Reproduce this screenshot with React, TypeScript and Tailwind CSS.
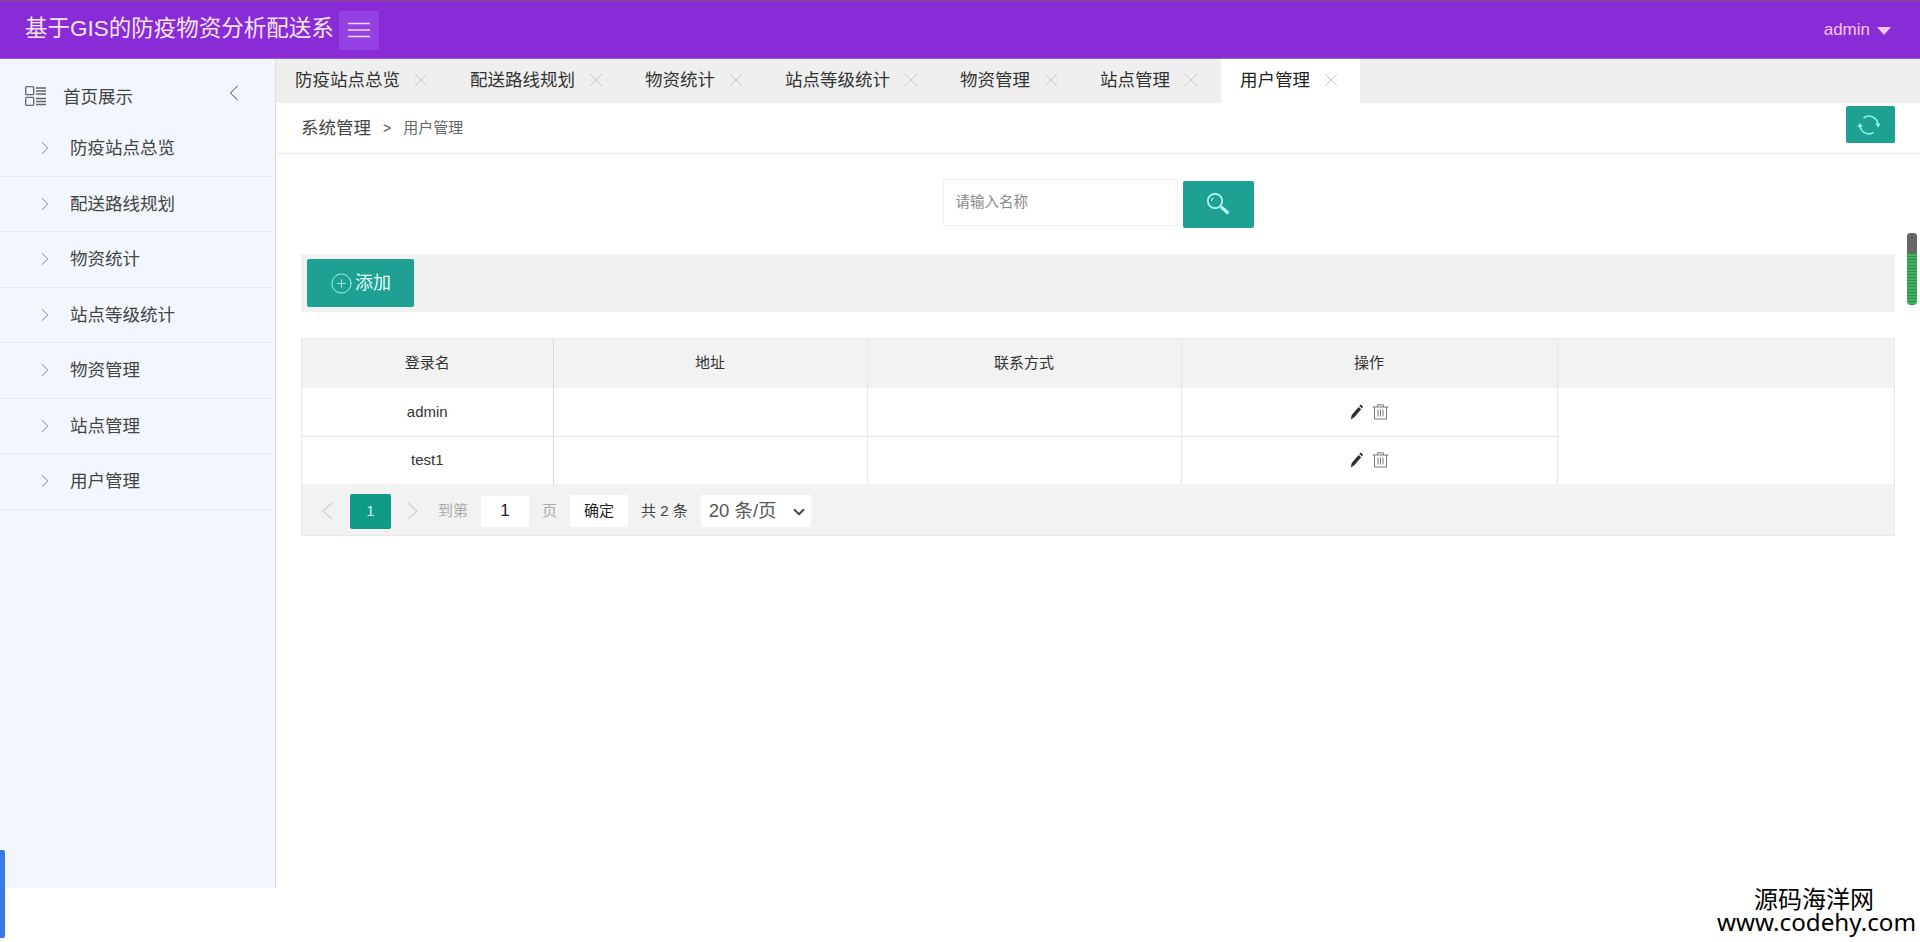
import { ChevronDown, ChevronLeft, ChevronRight, CirclePlus, X } from "lucide-react";

const menuItems = ["防疫站点总览", "配送路线规划", "物资统计", "站点等级统计", "物资管理", "站点管理", "用户管理"];
const tabs = ["防疫站点总览", "配送路线规划", "物资统计", "站点等级统计", "物资管理", "站点管理", "用户管理"];
const users = ["admin", "test1"];

function DashIcon() {
  return (
    <svg width="21" height="20" viewBox="0 0 21 20" fill="none" stroke="#666" strokeWidth="1.3">
      <rect x="0.7" y="0.7" width="8" height="8" rx="1" />
      <rect x="0.7" y="11.3" width="8" height="8" rx="1" />
      <path d="M11 2h10M11 5h10M11 8h10M11 12.5h10M11 15.5h10M11 18.5h10" />
    </svg>
  );
}

function RefreshIcon() {
  return (
    <svg width="24" height="24" viewBox="0 0 24 24" fill="none" stroke="#8ff5e8" strokeWidth="1.6">
      <path d="M6.5 5A9 9 0 0 1 21 11.5" />
      <path d="M16.5 19.5A9 9 0 0 1 3 13" />
      <path d="M18.2 10.5l2.9 4 2.6-4z" fill="#8ff5e8" stroke="none" />
      <path d="M5.8 14l-2.9-4-2.6 4z" fill="#8ff5e8" stroke="none" />
    </svg>
  );
}

function SearchIcon() {
  return (
    <svg width="24" height="24" viewBox="0 0 24 24" fill="none" stroke="#b8fbf1">
      <circle cx="9" cy="8" r="7.2" strokeWidth="1.7" />
      <path d="M5.5 8a3.6 3.6 0 0 1 2-3.2" strokeWidth="1.2" />
      <path d="M15.8 14.5l5.6 5" strokeWidth="3.2" strokeLinecap="round" />
    </svg>
  );
}

function PencilIcon() {
  return (
    <svg width="14" height="16" viewBox="0 0 14 16" fill="#2f2f2f">
      <path d="M10.6 0.6l2.6 2.2-1.3 1.5-2.6-2.2zM8.6 3l2.6 2.2-6.9 8L0.8 15.4l0.9-4.4z" />
    </svg>
  );
}

function TrashIcon() {
  return (
    <svg width="17" height="16" viewBox="0 0 17 16" fill="none" stroke="#777" strokeWidth="1">
      <path d="M0.5 3h16M5.5 3V0.8h6V3M2.5 3v12h12V3M6 5.5v7M8.5 5.5v7M11 5.5v7" />
    </svg>
  );
}

function PageArrow({ left }: { left?: boolean }) {
  return (
    <svg width="12" height="18" viewBox="0 0 12 18" fill="none" stroke="#cfcfcf" strokeWidth="1.2">
      <path d={left ? "M11 1L2 9l9 8" : "M1 1l9 8-9 8"} />
    </svg>
  );
}

export default function App() {
  return (
    <div className="relative h-[942px] overflow-hidden bg-white font-['Liberation_Sans','Noto_Sans_CJK_SC',sans-serif]">
      <header className="flex h-[59px] items-center justify-between border-t-2 border-b border-t-[#8d3fae] border-b-[#9a62c4] bg-[#8a2bd8] pr-[29px] pl-[25px]">
        <div className="flex items-center">
          <span className="mt-[-2px] text-[22.5px] text-[#f6e6f4]">基于GIS的防疫物资分析配送系</span>
          <button className="ml-[5px] flex h-[39px] w-[40px] items-center justify-center bg-[#9440e2]">
            <svg width="22" height="16" viewBox="0 0 22 16" stroke="#f3dcf3" strokeWidth="1.5">
              <path d="M0 1.5h22M0 8h22M0 14.5h22" />
            </svg>
          </button>
        </div>
        <div className="flex items-center gap-[7px] text-[17px] text-[#f6c6f2]">
          admin
          <span className="mt-[1px] h-0 w-0 border-x-[7px] border-t-[8px] border-x-transparent border-t-[#f6c6f2]" />
        </div>
      </header>

      <div className="flex items-start">
        <aside className="h-[829px] w-[276px] shrink-0 border-r border-[#d9dde2] bg-[#f2f6fe]">
          <div className="flex h-[62px] items-start pt-[27px] pr-[27px] pl-[25px] text-[17.5px] text-[#444]">
            <DashIcon />
            <span className="mt-[-2px] ml-[17px] leading-[26px]">首页展示</span>
            <ChevronLeft size={28} strokeWidth={0.9} className="mt-[-7px] ml-auto text-[#666]" />
          </div>
          <ul>
            {menuItems.map((item) => (
              <li key={item} className="flex h-[55.5px] items-center border-b border-[#e6eaf2] pl-[34px] text-[17.5px] text-[#444]">
                <ChevronRight size={22} strokeWidth={1} className="text-[#777]" />
                <span className="ml-[14px]">{item}</span>
              </li>
            ))}
          </ul>
        </aside>

        <main className="min-w-0 flex-1">
          <div className="flex h-[44px] bg-[#efefef]">
            {tabs.map((tab) => (
              <div
                key={tab}
                className={
                  tab === "用户管理"
                    ? "flex items-center bg-white pr-[17px] pb-[2px] pl-[19px] text-[17.5px] text-[#222]"
                    : "flex items-center pr-[18px] pb-[2px] pl-[19px] text-[17.5px] text-[#333]"
                }
              >
                {tab}
                <X size={24} strokeWidth={0.9} className="ml-[9px] text-[#c4c4c4]" />
              </div>
            ))}
          </div>

          <div className="flex h-[51px] items-center justify-between border-b border-[#e8e8e8] pr-[25px] pl-[25px]">
            <div className="flex items-center">
              <span className="text-[17.5px] text-[#444]">系统管理</span>
              <span className="ml-[12px] text-[14px] text-[#555]">&gt;</span>
              <span className="ml-[12px] text-[15px] text-[#666]">用户管理</span>
            </div>
            <button className="mt-[-7px] flex h-[37px] w-[49px] items-center justify-center rounded-[2px] bg-[#1ea192] pr-[3px]">
              <RefreshIcon />
            </button>
          </div>

          <div className="px-[25px]">
            <div className="flex justify-center pt-[25px]">
              <div className="flex h-[47px] w-[235px] items-center border border-[#f0f0f0] pt-[1px] pl-[12px] text-[14.5px] text-[#888]">请输入名称</div>
              <button className="mt-[2px] ml-[5px] flex h-[47px] w-[71px] items-center justify-center rounded-[2px] bg-[#1ea192]">
                <SearchIcon />
              </button>
            </div>

            <div className="mt-[26px] flex h-[58px] items-center bg-[#f1f1f1] pl-[6px]">
              <button className="flex h-[48px] w-[107px] items-center rounded-[2px] bg-[#1ea192] pl-[23px] text-[18px] text-[#e4fcf8]">
                <CirclePlus size={23} strokeWidth={1} className="mr-[2px] text-[#a5f5e8]" />
                添加
              </button>
            </div>

            <div className="mt-[26px] border border-[#e8e8e8] text-[15px] text-[#333]">
              <table className="w-full table-fixed border-collapse">
                <colgroup>
                  <col className="w-[251px]" />
                  <col className="w-[314px]" />
                  <col className="w-[314px]" />
                  <col className="w-[376px]" />
                  <col />
                </colgroup>
                <thead>
                  <tr className="h-[49px] bg-[#f2f2f2]">
                    <th className="border-r border-[#d8d8d8] font-normal">登录名</th>
                    <th className="border-r border-[#e8e8e8] font-normal">地址</th>
                    <th className="border-r border-[#e8e8e8] font-normal">联系方式</th>
                    <th className="border-r border-[#e8e8e8] font-normal">操作</th>
                    <th />
                  </tr>
                </thead>
                <tbody>
                  {users.map((name, i) => (
                    <tr key={name} className="h-[48px] border-b border-[#e2e2e2] last:border-b-0">
                      <td className="border-r border-[#d8d8d8] text-center">{name}</td>
                      <td className="border-r border-[#e8e8e8]" />
                      <td className="border-r border-[#e8e8e8]" />
                      <td className="border-r border-[#e8e8e8]">
                        <div className="flex items-center justify-center gap-[8px] pl-[1px]">
                          <PencilIcon />
                          <TrashIcon />
                        </div>
                      </td>
                      {i === 0 && <td rowSpan={2} className="bg-white" />}
                    </tr>
                  ))}
                </tbody>
              </table>

              <div className="flex h-[51px] items-center bg-[#f2f2f2] pt-[3px] pl-[19px] text-[15px]">
                <PageArrow left />
                <span className="ml-[17px] flex h-[35px] w-[41px] items-center justify-center rounded-[2px] bg-[#0f9a86] text-[#cff5ee]">1</span>
                <span className="ml-[16px]">
                  <PageArrow />
                </span>
                <span className="ml-[19px] text-[#aaa]">到第</span>
                <span className="ml-[13px] flex h-[31px] w-[48px] items-center justify-center bg-white text-[17px] text-[#222]">1</span>
                <span className="ml-[13px] text-[#aaa]">页</span>
                <span className="ml-[13px] flex h-[32px] w-[58px] items-center justify-center bg-white text-[#222]">确定</span>
                <span className="ml-[13px] text-[#444]">共 2 条</span>
                <div className="relative ml-[13px] h-[32px] w-[110px] bg-white">
                  <select className="h-full w-full appearance-none bg-transparent pl-[8px] text-[18.5px] text-[#555]" defaultValue="20">
                    <option value="20">20 条/页</option>
                  </select>
                  <ChevronDown size={18} strokeWidth={2.4} className="pointer-events-none absolute top-[8px] right-[3px] text-[#444]" />
                </div>
              </div>
            </div>
          </div>
        </main>
      </div>

      <div className="absolute top-[233px] right-[3px] h-[72px] w-[10px] rounded-[4px] bg-[repeating-linear-gradient(180deg,#3fae5f_0px,#3fae5f_2px,#2f8f4c_2px,#2f8f4c_3px)]">
        <div className="h-[20px] rounded-t-[4px] bg-[#666]" />
      </div>
      <div className="absolute bottom-[4px] left-0 h-[88px] w-[5px] rounded-r-[2px] bg-[#3b78e7]" />
      <div className="absolute right-[4px] bottom-[8px] flex flex-col items-center text-black">
        <span className="mr-[5px] text-[24px] leading-[20px]">源码海洋网</span>
        <span className="font-['Noto_Sans',sans-serif] text-[24.2px] leading-[24px]">www.codehy.com</span>
      </div>
    </div>
  );
}
